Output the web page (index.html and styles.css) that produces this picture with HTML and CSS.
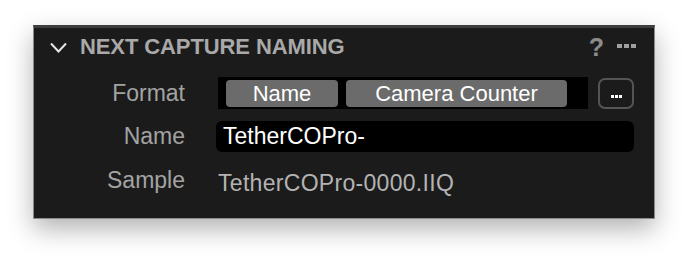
FILE: index.html
```html
<!DOCTYPE html>
<html lang="en">
<head>
    <title>Next Capture Naming</title>
    <meta charset="UTF-8">
    <link rel="stylesheet" href="styles.css">
</head>
<body>
    <div class="panel">
        <div class="panel-header">
            <svg class="chevron" width="17" height="11" viewBox="0 0 17 11">
                <path d="M1 1.5 L8.5 9.5 L16 1.5" fill="none" stroke="#e6e6e6" stroke-width="2"/>
            </svg>
            <span class="panel-title">NEXT CAPTURE NAMING</span>
            <span class="header-help">?</span>
            <span class="header-more">
                <i></i><i></i><i></i>
            </span>
        </div>

        <div class="panel-body">
            <div class="field-label">Format</div>
            <div class="format-row">
                <div class="token-strip">
                    <span class="token token-name">Name</span>
                    <span class="token token-counter">Camera Counter</span>
                </div>
                <button class="more-button">
                    <i></i><i></i><i></i>
                </button>
            </div>

            <div class="field-label">Name</div>
            <div class="name-input">TetherCOPro-</div>

            <div class="field-label">Sample</div>
            <div class="sample-value">TetherCOPro-0000.IIQ</div>
        </div>
    </div>
</body>
</html>
```

FILE: styles.css
```css
* {
    margin: 0;
    padding: 0;
    box-sizing: border-box;
    font-family: "Liberation Sans", Arial, sans-serif;
}

html {
    background: #ffffff;
}

body {
    min-height: 260px;
    padding: 25px 0 0 33px;
}

.panel {
    width: 622px;
    height: 194px;
    background: #1b1b1b;
    border: 1px solid #8c8c8c;
    border-top: 3px solid #3d3d3d;
    box-shadow: 0 10px 24px rgba(0, 0, 0, 0.3);
}

.panel-header {
    height: 38px;
    display: flex;
    align-items: center;
    padding: 0 18px 0 16px;
}

.chevron {
    margin-right: 13px;
    margin-top: 1px;
}

.panel-title {
    flex: 1;
    color: #a9a9a9;
    font-size: 22px;
    font-weight: bold;
    letter-spacing: -0.1px;
}

.header-help {
    color: #8c8c8c;
    font-size: 25px;
    font-weight: bold;
    margin-right: 13px;
}

.header-more {
    display: flex;
    gap: 2px;
    margin-top: -2px;
}

.header-more i {
    width: 5px;
    height: 4px;
    background: #a0a0a0;
}

.panel-body {
    display: grid;
    grid-template-columns: 151px 1fr;
    column-gap: 33px;
    row-gap: 12px;
    align-items: center;
    padding: 11px 20px 0 0;
}

.field-label {
    text-align: right;
    color: #a3a3a3;
    font-size: 23px;
}

.format-row {
    display: flex;
    gap: 10px;
    align-items: center;
}

.token-strip {
    width: 370px;
    height: 32px;
    background: #000000;
    display: flex;
    gap: 8px;
    padding: 3px 0 2px 8px;
}

.token {
    background: #6b6b6b;
    color: #ffffff;
    font-size: 22px;
    border-radius: 4px;
    display: flex;
    align-items: center;
    justify-content: center;
}

.token-name {
    width: 112px;
}

.token-counter {
    width: 221px;
}

.more-button {
    width: 36px;
    height: 31px;
    background: transparent;
    border: 2px solid #555555;
    border-radius: 7px;
    display: flex;
    justify-content: center;
    align-items: center;
    gap: 1px;
    padding-top: 7px;
}

.more-button i {
    width: 3px;
    height: 3px;
    background: #ffffff;
}

.name-input {
    height: 31px;
    margin-left: -2px;
    background: #000000;
    border-radius: 6px;
    color: #ffffff;
    font-size: 23px;
    padding: 2px 0 0 7px;
    line-height: 27px;
}

.sample-value {
    color: #b3b3b3;
    font-size: 23px;
    letter-spacing: 0.3px;
    padding-top: 6px;
}
```
